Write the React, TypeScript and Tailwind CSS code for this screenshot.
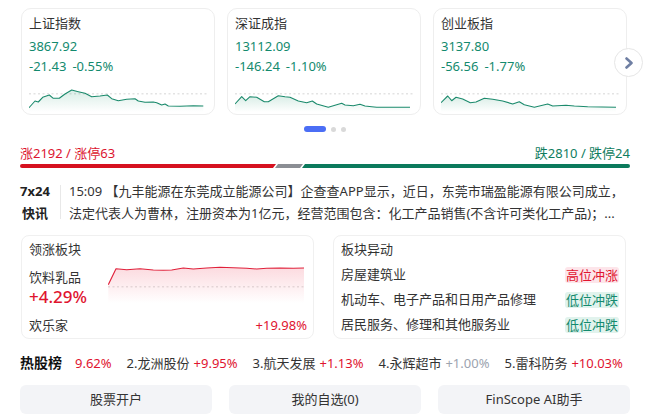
import React from "react";

const GREEN = "#138a6e";
const RED = "#e0142f";

type Pt = [number, number];

const spark1: Pt[] = [[0,25.7],[6,19],[9.3,20],[13.7,15.3],[20.3,13],[24.3,16.3],[30.3,16.3],[36,12],[42.7,8],[49.3,9.7],[56,11.3],[62.7,14.7],[71,14],[78.3,13],[82.7,16.7],[89.3,18.7],[97.7,17.3],[106,16.7],[109.3,19],[116,20.3],[124.3,20],[127.7,20.7],[132.7,23],[136,22],[139.3,24],[151,24.3],[164.3,23.7],[174.3,24]];
const spark2: Pt[] = [[0,22],[6.7,14.7],[10.7,18.7],[15,14.7],[21.7,15.3],[29.3,19.7],[33.3,19.7],[43.3,13.7],[50,14.7],[55,15.3],[63.3,19],[71.7,20.7],[77.3,19],[81.7,22],[93.3,25.3],[106.7,21.3],[110,23],[118.3,23.7],[125,22.3],[130,24],[136.7,24.7],[141.7,25.3],[156.7,25.3],[175,25.3]];
const spark3: Pt[] = [[0,20.7],[6.7,14],[10.7,18.7],[15,15.3],[21.7,17],[29.3,20.7],[35,20],[43.3,16.3],[51.7,17.3],[61.7,19],[71.7,22],[78.3,19.7],[83.3,22.7],[93.3,25.3],[106.7,22],[111.7,24],[125,23.3],[133.3,24],[146.7,24.7],[175,25.3]];
const sector: Pt[] = [[0.3,19.7],[8,3.7],[18.7,4.7],[32,3.7],[45.3,5],[55.3,5.3],[63.7,5],[75.3,3],[85.3,4],[98.7,3],[112,2.3],[125.3,2.7],[138.7,3.3],[148.7,4],[158.7,3.3],[172,3],[185.3,3.3],[196,3]];

function Spark({ pts, id, color, w, h, base, fillColor, opacity }: { pts: Pt[]; id: string; color: string; w: number; h: number; base: number; fillColor: string; opacity: number }) {
  const line = pts.map((p, i) => `${i ? "L" : "M"}${p[0]} ${p[1]}`).join(" ");
  const area = `${line} L${pts[pts.length - 1][0]} ${h} L${pts[0][0]} ${h} Z`;
  return (
    <svg width={w} height={h} viewBox={`0 0 ${w} ${h}`} className="block">
      <defs>
        <linearGradient id={id} x1="0" y1="0" x2="0" y2="1">
          <stop offset="0" stopColor={fillColor} stopOpacity={opacity} />
          <stop offset="1" stopColor={fillColor} stopOpacity={0} />
        </linearGradient>
      </defs>
      <line x1="0" y1={base} x2={w} y2={base} stroke="#e3e3e3" strokeWidth="1.5" strokeDasharray="2 2.5" />
      <path d={area} fill={`url(#${id})`} />
      <path d={line} fill="none" stroke={color} strokeWidth="1.1" strokeLinejoin="round" />
    </svg>
  );
}

function IndexCard({ name, value, chg, pct, pts, id }: { name: string; value: string; chg: string; pct: string; pts: Pt[]; id: string }) {
  return (
    <div className="w-[194px] h-[107px] border border-[#eeeeee] rounded-[10px] pl-[7px] pt-[4px] bg-white">
      <div className="text-[13px] leading-[20px] text-[#333]">{name}</div>
      <div className="mt-[3px] text-[13px] leading-[20px] text-[#138a6e]">{value}</div>
      <div className="text-[13px] leading-[20px] text-[#138a6e] flex gap-[6px]">
        <span>{chg}</span>
        <span>{pct}</span>
      </div>
      <div className="mt-[6px]">
        <Spark pts={pts} id={id} color="#1b8a6c" w={178} h={30} base={11.7} fillColor="#2a9a74" opacity={0.18} />
      </div>
    </div>
  );
}

function Tag({ up, text }: { up: boolean; text: string }) {
  return (
    <span className={up ? "w-[54px] h-[16px] leading-[16px] text-center text-[13px] rounded-[3px] bg-[#fde5ea] text-[#e0142f]" : "w-[54px] h-[16px] leading-[16px] text-center text-[13px] rounded-[3px] bg-[#e1f3ed] text-[#138a6e]"}>
      {text}
    </span>
  );
}

export default function App() {
  const hot = [
    { n: "2.龙洲股份", p: "+9.95%", c: "text-[#e0142f]" },
    { n: "3.航天发展", p: "+1.13%", c: "text-[#e0142f]" },
    { n: "4.永辉超市", p: "+1.00%", c: "text-[#9ca3af]" },
    { n: "5.雷科防务", p: "+10.03%", c: "text-[#e0142f]" },
  ];
  return (
    <div className="w-[657px] h-[418px] bg-white overflow-hidden pt-[8px] font-['Noto_Sans','Noto_Sans_CJK_SC',sans-serif] text-[#333]">
      <div className="relative ml-[21px] w-[606px] flex gap-[12px]">
        <IndexCard name="上证指数" value="3867.92" chg="-21.43" pct="-0.55%" pts={spark1} id="g1" />
        <IndexCard name="深证成指" value="13112.09" chg="-146.24" pct="-1.10%" pts={spark2} id="g2" />
        <IndexCard name="创业板指" value="3137.80" chg="-56.56" pct="-1.77%" pts={spark3} id="g3" />
        <div className="absolute left-[593px] top-[40px] w-[29px] h-[29px] rounded-full border border-[#e6e6e6] bg-white flex items-center justify-center">
          <svg width="10" height="12" viewBox="0 0 10 12">
            <polyline points="2.5,1.5 7.5,6 2.5,10.5" fill="none" stroke="#6f7fa3" strokeWidth="2.6" strokeLinecap="round" strokeLinejoin="round" />
          </svg>
        </div>
      </div>

      <div className="ml-[20px] w-[610px]">
        <div className="mt-[11px] h-[6px] flex justify-center items-center gap-[5px]">
          <span className="w-[22px] h-[6px] rounded-full bg-[#4b6ef5]" />
          <span className="w-[5px] h-[5px] rounded-full bg-[#d9d9d9]" />
          <span className="w-[5px] h-[5px] rounded-full bg-[#d9d9d9]" />
        </div>

        <div className="mt-[12px] flex justify-between text-[13px] leading-[18px]">
          <span className="text-[#dc1530]">涨2192 / 涨停63</span>
          <span className="text-[#0f7d60]">跌2810 / 跌停24</span>
        </div>
        <div className="mt-[2px] h-[4px] flex">
          <div className="w-[256px] h-[4px] bg-[#d6111f] rounded-l-full [clip-path:polygon(0_0,100%_0,calc(100%-3px)_100%,0_100%)]" />
          <div className="w-[28px] h-[4px] ml-[-1px] bg-[#8b8e94] [clip-path:polygon(3px_0,100%_0,calc(100%-3px)_100%,0_100%)]" />
          <div className="flex-1 h-[4px] ml-[-1px] bg-[#0b7a5c] rounded-r-full [clip-path:polygon(3px_0,100%_0,100%_100%,0_100%)]" />
        </div>

        <div className="mt-[12px] flex items-center">
          <div className="w-[30px] flex flex-col items-center text-[13px] leading-[22px] font-bold text-[#222]">
            <span>7x24</span>
            <span>快讯</span>
          </div>
          <div className="ml-[10px] w-px h-[34px] bg-[#e8e8e8]" />
          <div className="ml-[8px] text-[13px] leading-[22px] text-[#333] whitespace-nowrap">
            <div>15:09 【九丰能源在东莞成立能源公司】企查查APP显示，近日，东莞市瑞盈能源有限公司成立，</div>
            <div>法定代表人为曹林，注册资本为1亿元，经营范围包含：化工产品销售(不含许可类化工产品)；...</div>
          </div>
        </div>

        <div className="mt-[11px] ml-[1px] w-[605px] flex gap-[19px]">
          <div className="flex-1 h-[104px] border border-[#f0f0f0] rounded-[8px] pl-[7px] pr-[6px] pt-[3px]">
            <div className="text-[13px] leading-[20px] text-[#333]">领涨板块</div>
            <div className="mt-[8px] flex items-start">
              <div className="w-[79px]">
                <div className="text-[13px] leading-[20px] text-[#333]">饮料乳品</div>
                <div className="text-[17px] leading-[20px] font-medium text-[#e0142f]">+4.29%</div>
              </div>
              <div className="-mt-[2px]">
                <Spark pts={sector} id="g4" color="#e0203a" w={197} h={38} base={21.7} fillColor="#f04860" opacity={0.2} />
              </div>
            </div>
            <div className="mt-[8px] flex justify-between text-[13px] leading-[20px]">
              <span className="text-[#333]">欢乐家</span>
              <span className="text-[#e0142f]">+19.98%</span>
            </div>
          </div>

          <div className="flex-1 h-[104px] border border-[#f0f0f0] rounded-[8px] pl-[7px] pr-[6px] pt-[3px]">
            <div className="text-[13px] leading-[20px] text-[#333]">板块异动</div>
            <div className="mt-[3px] flex flex-col text-[13px]">
              <div className="h-[25px] flex items-center justify-between">
                <span>房屋建筑业</span>
                <Tag up text="高位冲涨" />
              </div>
              <div className="h-[25px] flex items-center justify-between">
                <span>机动车、电子产品和日用产品修理</span>
                <Tag up={false} text="低位冲跌" />
              </div>
              <div className="h-[25px] flex items-center justify-between">
                <span>居民服务、修理和其他服务业</span>
                <Tag up={false} text="低位冲跌" />
              </div>
            </div>
          </div>
        </div>

        <div className="mt-[14px] flex items-center text-[13px] leading-[20px] whitespace-nowrap">
          <span className="text-[14px] font-bold text-[#111]">热股榜</span>
          <span className="ml-[13px] text-[#e0142f]">9.62%</span>
          {hot.map((h) => (
            <span key={h.n} className="ml-[15px]">
              <span className="text-[#333]">{h.n}</span>
              <span className={`ml-[4px] ${h.c}`}>{h.p}</span>
            </span>
          ))}
        </div>

        <div className="mt-[12px] flex gap-[17px]">
          <div className="flex-1 h-[29px] rounded-[6px] bg-[#f3f4f7] flex items-center justify-center text-[13px] text-[#333]">股票开户</div>
          <div className="flex-1 h-[29px] rounded-[6px] bg-[#f3f4f7] flex items-center justify-center text-[13px] text-[#333]">我的自选(0)</div>
          <div className="flex-1 h-[29px] rounded-[6px] bg-[#f3f4f7] flex items-center justify-center text-[13px] text-[#333]">FinScope AI助手</div>
        </div>
      </div>
    </div>
  );
}
